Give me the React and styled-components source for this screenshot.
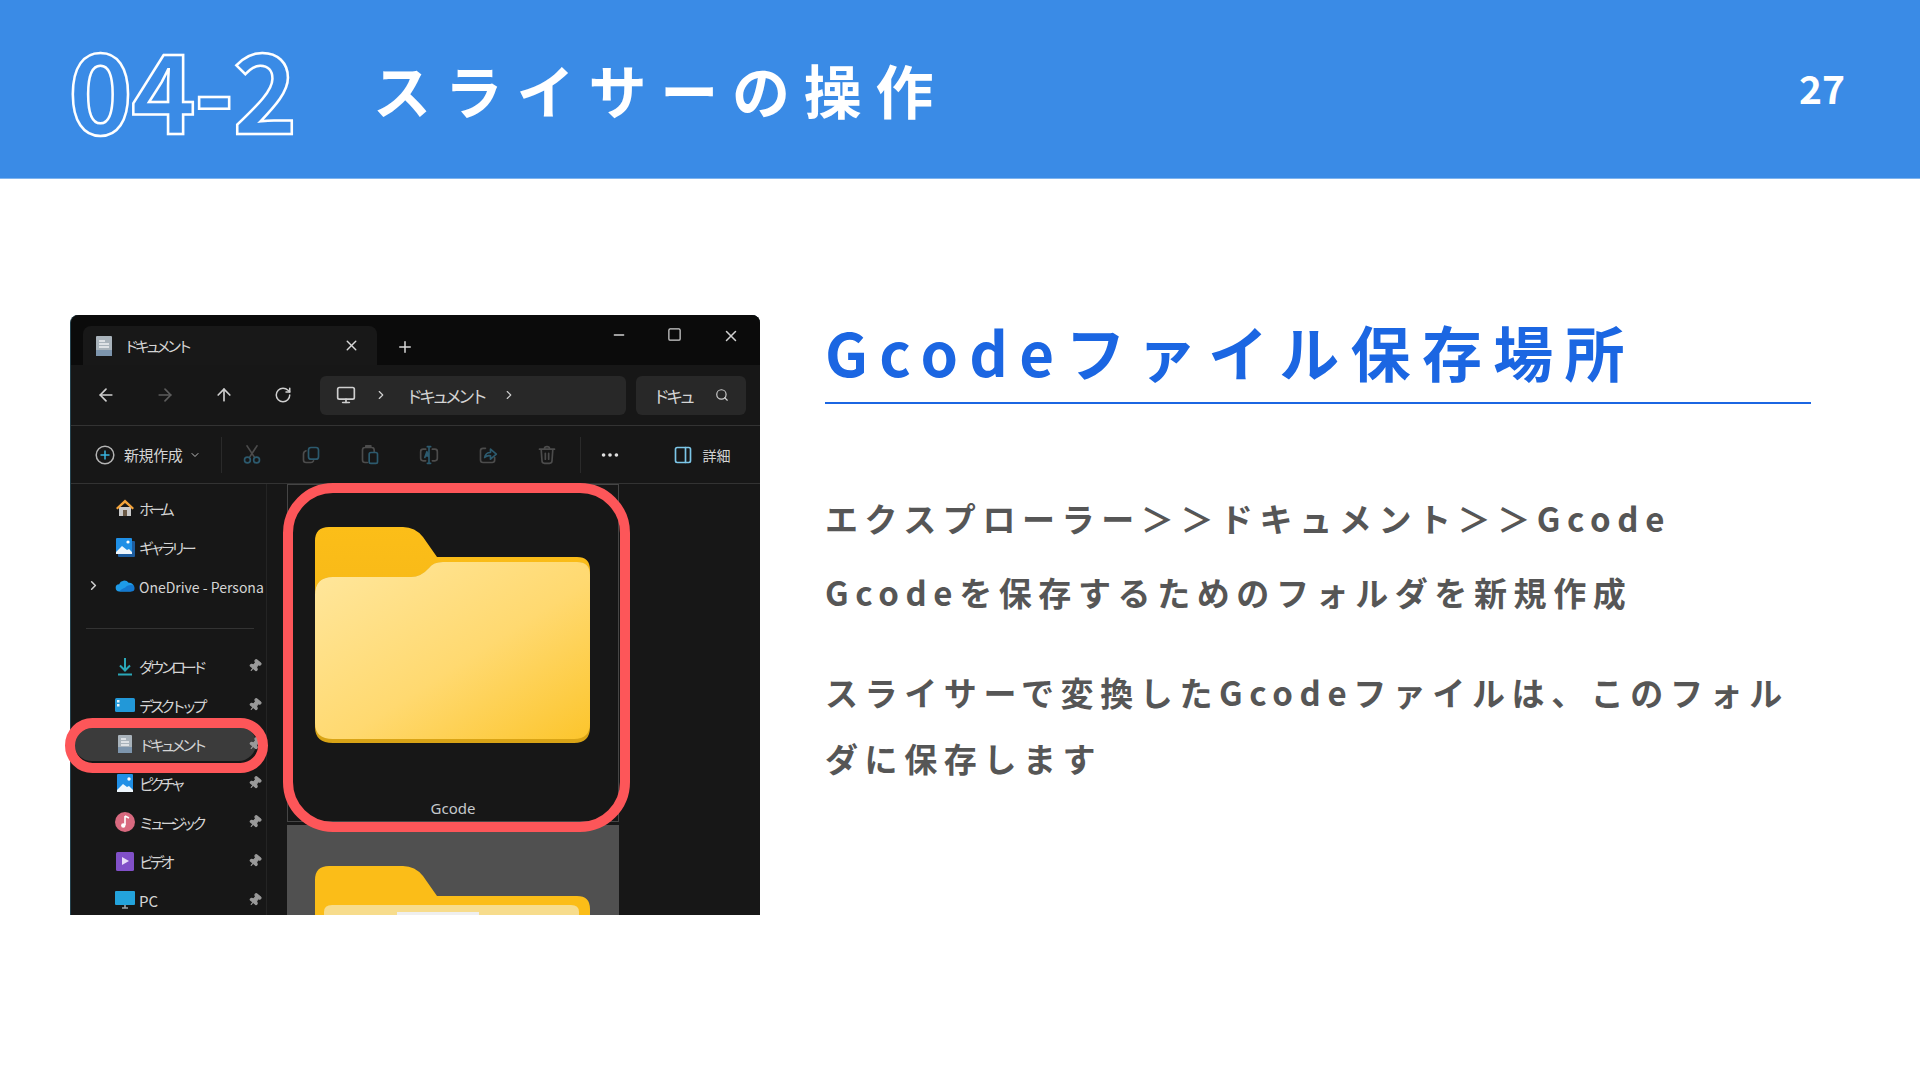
import React from "react";
import styled, { createGlobalStyle } from "styled-components";
import {
  ArrowLeft, ArrowRight, ArrowUp, RotateCw, Monitor, ChevronRight, ChevronDown, Search,
  Ellipsis, PanelRight, Pin, X, Plus, Minus, Square,
} from "lucide-react";

const JP = `"Noto Sans CJK JP", "Noto Sans", sans-serif`;

const Global = createGlobalStyle`
  html, body { margin: 0; padding: 0; background: #fff; }
  body { width: 1920px; height: 1080px; overflow: hidden; font-family: ${JP}; }
`;

const Page = styled.div`width: 1920px; height: 1080px; background: #fff; display: flex; flex-direction: column;`;
const Header = styled.header`
  height: 178px; background: #3a8be6; border-bottom: 1px solid #7fb4ee; box-sizing: content-box;
  display: flex; align-items: center; padding: 0 75px 0 68px; color: #fff;
`;
const SectionNo = styled.div`
  font-size: 110px; line-height: 1; font-weight: 700; color: transparent; letter-spacing: -2px;
  -webkit-text-stroke: 2.5px #fff; width: 305px; flex: none; margin-top: -7px;
`;
const Title = styled.h1`
  margin: 0; font-size: 58px; font-weight: 700; letter-spacing: 13.8px; line-height: 1; flex: 1;
  margin-top: -1px;
`;
const PageNo = styled.div`font-size: 39px; font-weight: 700; line-height: 1; margin-top: -4px;`;

const Main = styled.main`display: flex; padding: 136px 0 0 70px; align-items: flex-start;`;

const Win = styled.div`
  position: relative; width: 690px; height: 600px; flex: none; background: #171717;
  display: flex; flex-direction: column; border-radius: 8px 8px 0 0; color: #ccc;
  border-left: 1px solid #24424e; box-sizing: border-box; box-shadow: inset 0 2px 0 #2c3f47;
`;
const TabBar = styled.div`
  height: 50px; flex: none; background: #0b0b0b; border-radius: 8px 8px 0 0; display: flex;
  align-items: flex-end; padding-left: 12px;
`;
const Tab = styled.div`
  width: 294px; height: 39px; background: #181818; border-radius: 8px 8px 0 0; display: flex;
  align-items: center; padding: 0 17px 0 13px; box-sizing: border-box; gap: 12px;
`;
const Small = styled.span`
  font-size: ${p => p.$size || 15}px; letter-spacing: ${p => p.$ls ?? -4.3}px; white-space: nowrap;
  color: ${p => p.$color || "#d4d4d4"}; line-height: 1; font-weight: 400;
`;
const TabClose = styled.span`margin-left: auto; display: flex;`;
const NewTab = styled.span`display: flex; margin: 0 0 9px 19px;`;
const WinControls = styled.div`
  margin-left: auto; display: flex; align-self: flex-start; margin-top: 12px; padding-right: 20px; gap: 40px;
`;
const NavRow = styled.div`
  height: 60px; flex: none; display: flex; align-items: center; padding-left: 5px;
  border-bottom: 1px solid #333;
`;
const Slot = styled.span`width: ${p => p.$w || 59}px; flex: none; display: flex; justify-content: center; align-items: center;`;
const Address = styled.div`
  width: 306px; height: 39px; background: #282828; border-radius: 6px; margin-left: 8px; display: flex;
  align-items: center; padding-left: 16px; box-sizing: border-box; gap: 18px;
`;
const SearchBox = styled.div`
  width: 110px; height: 39px; background: #282828; border-radius: 6px; margin-left: 10px; display: flex;
  align-items: center; padding: 0 17px 0 17px; box-sizing: border-box; justify-content: space-between;
`;
const ToolRow = styled.div`
  height: 57px; flex: none; display: flex; align-items: center; padding-left: 24px; border-bottom: 1px solid #333;
`;
const NewLabel = styled.span`margin: 0 7px 0 9px; display: flex;`;
const Sep = styled.span`width: 1px; height: 36px; background: #2a2a2a; flex: none; margin: ${p => p.$m || "0"};`;
const Details = styled.span`display: flex; align-items: center; gap: 9px; margin-left: 34px;`;
const Body = styled.div`flex: 1; min-height: 0; display: flex; overflow: hidden;`;
const Sidebar = styled.nav`
  width: 196px; flex: none; border-right: 1px solid #242424; box-sizing: border-box; padding-top: 4px;
`;
const Row = styled.div`
  height: ${p => (p.$active ? 35 : 39)}px; box-sizing: border-box; display: flex; align-items: center;
  padding: 0 ${p => (p.$active ? 0 : 4)}px 0 ${p => (p.$active ? 11 : 14)}px;
  margin: ${p => (p.$active ? "2px 10px 2px 3px" : "0")};
  background: ${p => (p.$active ? "#3b3b3b" : "none")}; border-radius: 18px;
`;
const Lead = styled.span`width: 30px; flex: none; display: flex; align-items: center; justify-content: flex-start; padding-left: 1px; box-sizing: border-box;`;
const RowIcon = styled.span`width: 20px; height: 20px; flex: none; display: flex; margin-right: 4px;`;
const RowLabel = styled.span`flex: 1; min-width: 0; white-space: nowrap; display: block; line-height: 20px;`;
const PinSlot = styled.span`flex: none; display: flex; margin-right: ${p => (p.$active ? -6 : 0)}px;`;
const SideGap = styled.div`height: 41px; box-sizing: border-box; padding-top: 6px; display: flex; align-items: center; padding-left: 15px;`;
const SideRule = styled.div`width: 168px; height: 1px; background: #333;`;
const Content = styled.div`flex: 1; padding: 0 0 0 20px; display: flex; flex-direction: column; gap: 3px;`;
const Cell = styled.div`
  width: 332px; height: 338px; flex: none; box-sizing: border-box; border: 1px solid #454545; position: relative;
  display: flex; flex-direction: column; align-items: center; padding-top: 42px; padding-right: 2px;
`;
const CellLabel = styled.span`
  margin: auto 0 3px 2px; font-size: 15px; line-height: 20px; color: #c5c9cc; font-family: "Noto Sans", sans-serif;
`;
const Cell2 = styled.div`
  width: 332px; flex: 1; background: #505050; padding: 41px 0 0 28px; box-sizing: border-box; overflow: hidden;
`;
const Ring = styled.div`
  position: absolute; box-sizing: border-box; border: 10px solid #fd5659; pointer-events: none;
  left: ${p => p.$x}px; top: ${p => p.$y}px; width: ${p => p.$w}px; height: ${p => p.$h}px; border-radius: ${p => p.$r}px;
`;

const Right = styled.section`width: 986px; margin-left: 65px; flex: none; display: flex; flex-direction: column;`;
const Heading = styled.h2`
  margin: 0; height: 87px; border-bottom: 2px solid #1b66e2; color: #1b66e2; font-size: 60px;
  font-weight: 700; letter-spacing: 11.3px; line-height: 72px; white-space: nowrap;
`;
const Para = styled.p`
  margin: ${p => p.$mt}px 0 0; color: #565656; font-size: 33px; font-weight: 700; letter-spacing: 6.6px;
  line-height: ${p => p.$lh}px;
`;

const Folder = () => (
  <svg width="275" height="216" viewBox="0 0 275 216">
    <defs>
      <linearGradient id="fg" x1="0" y1="0" x2="1" y2="1">
        <stop offset="0" stopColor="#ffe79e" />
        <stop offset="0.55" stopColor="#ffd970" />
        <stop offset="1" stopColor="#fcc52c" />
      </linearGradient>
      <linearGradient id="tabShade" x1="0" y1="0" x2="0" y2="1">
        <stop offset="0" stopColor="#fcbe18" />
        <stop offset="0.6" stopColor="#f8ba18" />
        <stop offset="1" stopColor="#e2a814" />
      </linearGradient>
    </defs>
    <path d="M0 65V14Q0 0 14 0H88Q100 0 108 10L122 30H262Q275 30 275 43V100H0Z" fill="url(#tabShade)" />
    <path d="M0 68Q0 50 18 50H96Q106 50 114 41Q118 35 128 35H262Q275 35 275 48V200Q275 216 259 216H18Q0 216 0 200Z" fill="#d9a416" />
    <path d="M0 68Q0 50 18 50H96Q106 50 114 41Q118 35 128 35H262Q275 35 275 48V196Q275 212 259 212H18Q0 212 0 196Z" fill="url(#fg)" />
  </svg>
);
const Folder2 = () => (
  <svg width="275" height="60" viewBox="0 0 275 60" style={{ display: "block" }}>
    <path d="M0 60V14Q0 0 14 0H88Q100 0 108 10L122 30H262Q275 30 275 43V60Z" fill="#fbbd18" />
    <path d="M9 60V46Q9 39 17 39H256Q264 39 264 46V60Z" fill="#f7dc8c" />
    <rect x="82" y="46" width="82" height="14" fill="#efefef" />
  </svg>
);

const Gl = "#4c4c4c";
const Te = "#2c5a6e";
const Tool = ({ children }) => (
  <svg width="20" height="20" viewBox="0 0 24 24" fill="none" strokeWidth="2" strokeLinecap="round" strokeLinejoin="round">{children}</svg>
);
const ICut = () => (
  <Tool>
    <path d="M6 1l8.500 13M18 1L9.500 14" stroke={Gl} />
    <circle cx="6.500" cy="18" r="3.500" stroke={Te} /><circle cx="17.500" cy="18" r="3.500" stroke={Te} />
  </Tool>
);
const ICopy = () => (
  <Tool>
    <path d="M6 7Q3 8 3 11v7q0 3 3 3h6q2 0 3-2" stroke={Gl} />
    <rect x="9" y="3" width="12" height="14" rx="3" stroke={Te} />
  </Tool>
);
const IPaste = () => (
  <Tool>
    <path d="M9 21H6q-3 0-3-3V6q0-3 3-3h8q3 0 3 3v2M7 3V1h6v2" stroke={Gl} />
    <rect x="11" y="9" width="10" height="13" rx="2" stroke={Te} />
  </Tool>
);
const IRename = () => (
  <Tool>
    <path d="M8 5H5Q2 5 2 8v8q0 3 3 3h3M16 5h3q3 0 3 3v8q0 3-3 3h-3" stroke={Gl} />
    <path d="M12 2v20M10 2h4M10 22h4M7 15l2.500-7 2.500 7M8 13h3" stroke={Te} />
  </Tool>
);
const IShare = () => (
  <Tool>
    <path d="M9 4H6Q3 4 3 7v11q0 3 3 3h11q3 0 3-3v-3" stroke={Gl} />
    <path d="M8 15q1-6 7-6V5l7 6-7 6v-4q-4-1-7 2z" stroke={Te} />
  </Tool>
);
const ITrash = () => (
  <Tool>
    <path d="M3 5h18M9 4q0-2 3-2t3 2M5 5l1 14q0 3 3 3h6q3 0 3-3l1-14M10 10v7M14 10v7" stroke={Gl} />
  </Tool>
);
const INew = () => (
  <svg width="20" height="20" viewBox="0 0 20 20" fill="none" strokeWidth="1.500">
    <circle cx="10" cy="10" r="8.800" stroke="#b5b5b5" />
    <path d="M10 5.500v9M5.500 10h9" stroke="#38b4e0" />
  </svg>
);

const IHome = () => (
  <svg width="20" height="20" viewBox="0 0 20 20">
    <path d="M4 9h12v9H4z" fill="#c9c9c9" /><rect x="8" y="12" width="4" height="6" fill="#6b5a46" />
    <path d="M10 1.500L1 10l1.500 1.500L10 5l7.500 6.500L19 10z" fill="#f3a33a" />
  </svg>
);
const IGallery = () => (
  <svg width="20" height="20" viewBox="0 0 20 20">
    <rect x="3" y="4" width="17" height="16" rx="1" fill="#1d5c9e" />
    <rect x="1" y="1" width="16" height="16" rx="1" fill="#1f8fe6" />
    <path d="M1 15l6-6 5 4 2-1 3 3v2H1z" fill="#eef6fc" /><circle cx="13" cy="5" r="1.600" fill="#fff" />
  </svg>
);
const ICloud = () => (
  <svg width="22" height="20" viewBox="0 0 22 20">
    <path d="M5 16a4 4 0 0 1-.5-8A6 6 0 0 1 15 6.500 4.800 4.800 0 0 1 17 16z" fill="#1e9be8" />
    <path d="M5 16h13a3.500 3.500 0 0 0 0-7c-4 0-5 1-7 3-2 1-4 1-6 4z" fill="#1478d0" />
  </svg>
);
const IDownload = () => (
  <svg width="20" height="20" viewBox="0 0 20 20" fill="none" stroke="#2aa7b8" strokeWidth="2">
    <path d="M10 2v12M5 9.500l5 5 5-5M3 18.500h14" />
  </svg>
);
const IDesktop = () => (
  <svg width="20" height="20" viewBox="0 0 20 20">
    <rect x="0" y="3" width="20" height="14" rx="1.500" fill="#2298d8" />
    <rect x="2" y="5" width="2.500" height="2.500" fill="#e6f4fb" /><rect x="2" y="9" width="2.500" height="2.500" fill="#e6f4fb" />
  </svg>
);
const IDoc = () => (
  <svg width="20" height="20" viewBox="0 0 20 20">
    <rect x="3" y="1" width="14" height="18" rx="1" fill="#a9b3bb" />
    <rect x="3" y="13" width="14" height="6" fill="#7d95ad" />
    <path d="M6 5h5M6 8h8M6 11h8" stroke="#eef1f3" strokeWidth="1.300" />
  </svg>
);
const IPicture = () => (
  <svg width="20" height="20" viewBox="0 0 20 20">
    <rect x="2" y="1" width="16" height="18" rx="1" fill="#1f8fe6" />
    <path d="M2 17l6-6 4 3 2-1 4 4v2H2z" fill="#eef6fc" /><circle cx="14" cy="6" r="1.700" fill="#fff" />
  </svg>
);
const IMusic = () => (
  <svg width="20" height="20" viewBox="0 0 20 20">
    <circle cx="10" cy="10" r="10" fill="#d8697f" />
    <path d="M10 4v9M10 4l4 2" stroke="#fff" strokeWidth="1.600" fill="none" /><circle cx="8.300" cy="13.500" r="2.200" fill="#fff" />
  </svg>
);
const IVideo = () => (
  <svg width="20" height="20" viewBox="0 0 20 20">
    <rect x="1" y="1" width="18" height="19" rx="1.500" fill="#8150c8" />
    <path d="M7 6v8l7-4z" fill="#e9def8" />
  </svg>
);
const IPc = () => (
  <svg width="20" height="20" viewBox="0 0 20 20">
    <rect x="0" y="1" width="20" height="14" rx="1" fill="#23a3dc" />
    <path d="M7 18h6M10 15v3" stroke="#9aa4ab" strokeWidth="1.600" />
  </svg>
);
const IDocTab = () => (
  <svg width="16" height="20" viewBox="0 0 16 20">
    <rect x="0" y="0" width="16" height="20" rx="1" fill="#a9b3bb" />
    <rect x="0" y="14" width="16" height="6" fill="#7d95ad" />
    <path d="M3 5h6M3 8h10M3 11h10" stroke="#eef1f3" strokeWidth="1.300" />
  </svg>
);

const places = [
  { icon: <IDownload />, label: "ダウンロード" },
  { icon: <IDesktop />, label: "デスクトップ" },
  { icon: <IDoc />, label: "ドキュメント", active: true },
  { icon: <IPicture />, label: "ピクチャ" },
  { icon: <IMusic />, label: "ミュージック" },
  { icon: <IVideo />, label: "ビデオ" },
  { icon: <IPc />, label: "PC", latin: true },
];

const tools = [ICut, ICopy, IPaste, IRename, IShare, ITrash];

export default function App() {
  return (
    <Page>
      <Global />
      <Header>
        <SectionNo>04-2</SectionNo>
        <Title>スライサーの操作</Title>
        <PageNo>27</PageNo>
      </Header>
      <Main>
        <Win>
          <TabBar>
            <Tab>
              <IDocTab />
              <Small>ドキュメント</Small>
              <TabClose><X size={17} color="#d8d8d8" /></TabClose>
            </Tab>
            <NewTab><Plus size={18} color="#d8d8d8" /></NewTab>
            <WinControls>
              <Minus size={16} color="#d0d0d0" />
              <Square size={15} color="#d0d0d0" />
              <X size={18} color="#d0d0d0" />
            </WinControls>
          </TabBar>
          <NavRow>
            <Slot><ArrowLeft size={20} color="#cfcfcf" /></Slot>
            <Slot><ArrowRight size={20} color="#5d5d5d" /></Slot>
            <Slot><ArrowUp size={20} color="#cfcfcf" /></Slot>
            <Slot><RotateCw size={18} color="#cfcfcf" /></Slot>
            <Address>
              <Monitor size={20} color="#cfcfcf" />
              <ChevronRight size={14} color="#cfcfcf" />
              <Small $size={17} $ls={-4}>ドキュメント</Small>
              <ChevronRight size={14} color="#cfcfcf" />
            </Address>
            <SearchBox>
              <Small $size={17} $ls={-4}>ドキュ</Small>
              <Search size={14} color="#cfcfcf" />
            </SearchBox>
          </NavRow>
          <ToolRow>
            <INew />
            <NewLabel><Small $size={15} $ls={-0.4}>新規作成</Small></NewLabel>
            <ChevronDown size={12} color="#bbb" />
            <Sep $m="0 0 0 20px" />
            {tools.map((T, i) => (
              <Slot key={i}><T /></Slot>
            ))}
            <Sep $m="0 0 0 4px" />
            <Slot $w={58}><Ellipsis size={22} color="#e0e0e0" /></Slot>
            <Details>
              <PanelRight size={20} color="#7cc6e8" />
              <Small $size={14} $ls={0}>詳細</Small>
            </Details>
          </ToolRow>
          <Body>
            <Sidebar>
              <Row><Lead /><RowIcon><IHome /></RowIcon><RowLabel><Small>ホーム</Small></RowLabel></Row>
              <Row><Lead /><RowIcon><IGallery /></RowIcon><RowLabel><Small>ギャラリー</Small></RowLabel></Row>
              <Row>
                <Lead><ChevronRight size={15} color="#cfcfcf" strokeWidth={2.5} /></Lead>
                <RowIcon><ICloud /></RowIcon>
                <RowLabel><Small $size={14} $ls={0}>OneDrive - Persona</Small></RowLabel>
              </Row>
              <SideGap><SideRule /></SideGap>
              {places.map(p => (
                <Row key={p.label} $active={p.active}>
                  <Lead />
                  <RowIcon>{p.icon}</RowIcon>
                  <RowLabel><Small $ls={p.latin ? 0 : undefined}>{p.label}</Small></RowLabel>
                  <PinSlot $active={p.active}><Pin size={14} color="#9a9a9a" fill="#9a9a9a" style={{ transform: "rotate(40deg)" }} /></PinSlot>
                </Row>
              ))}
            </Sidebar>
            <Content>
              <Cell>
                <Folder />
                <CellLabel>Gcode</CellLabel>
              </Cell>
              <Cell2><Folder2 /></Cell2>
            </Content>
          </Body>
          <Ring $x={-6} $y={403} $w={203} $h={55} $r={28} />
          <Ring $x={212} $y={168} $w={347} $h={349} $r={50} />
        </Win>
        <Right>
          <Heading>Gcodeファイル保存場所</Heading>
          <Para $mt={77} $lh={74}>
            エクスプローラー＞＞ドキュメント＞＞Gcode<br />
            Gcodeを保存するためのフォルダを新規作成
          </Para>
          <Para $mt={30} $lh={66}>スライサーで変換したGcodeファイルは、このフォルダに保存します</Para>
        </Right>
      </Main>
    </Page>
  );
}
